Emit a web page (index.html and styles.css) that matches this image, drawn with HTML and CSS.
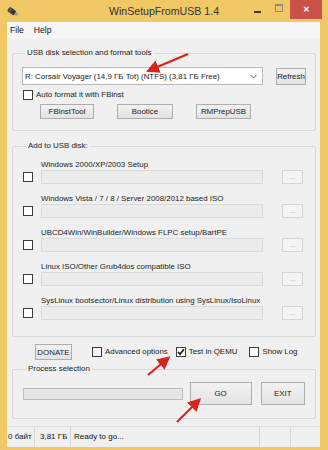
FILE: index.html
```html
<!DOCTYPE html>
<html>
<head>
    <title>WinSetupFromUSB 1.4</title>
    <link rel="stylesheet" href="styles.css">
</head>
<body>
<div class="window">
    <div class="titlebar">
        <div class="title-left">
            <svg class="app-icon" width="12" height="12" viewBox="0 0 12 12">
                <g transform="rotate(35 6 6)">
                    <rect x="0.5" y="3.5" width="8" height="5" rx="1" fill="#3a3a3a"/>
                    <rect x="8.5" y="4.3" width="3" height="3.4" fill="#9a9a9a"/>
                    <rect x="1.5" y="4.5" width="2" height="3" fill="#6b6b6b"/>
                </g>
            </svg>
        </div>
        <span class="title">WinSetupFromUSB 1.4</span>
        <div class="caption-buttons">
            <span class="cap cap-min"><i></i></span>
            <span class="cap cap-max"><i></i></span>
            <span class="cap cap-close">&#x2715;</span>
        </div>
    </div>

    <div class="client">
        <div class="menubar">
            <span>File</span>
            <span>Help</span>
        </div>

        <fieldset class="group group-usb">
            <legend>USB disk selection and format tools</legend>
            <div class="disk-row">
                <div class="combo">
                    <span>R: Corsair Voyager (14,9 ГБ Tot) (NTFS) (3,81 ГБ Free)</span>
                    <svg class="chevron" width="7" height="5" viewBox="0 0 7 5"><path d="M0.5 1 L3.5 4 L6.5 1" fill="none" stroke="#555" stroke-width="1"/></svg>
                </div>
                <button class="btn btn-refresh">Refresh</button>
            </div>
            <div class="check check-auto"><span class="box"></span>Auto format it with FBinst</div>
            <div class="tool-row">
                <button class="btn btn-fbinst">FBinstTool</button>
                <button class="btn btn-bootice">Bootice</button>
                <button class="btn btn-rmprep">RMPrepUSB</button>
            </div>
        </fieldset>

        <fieldset class="group group-add">
            <legend>Add to USB disk:</legend>
            <div class="source">
                <span class="src-label">Windows 2000/XP/2003 Setup</span>
                <span class="box"></span>
                <span class="path"></span>
                <span class="browse">...</span>
            </div>
            <div class="source">
                <span class="src-label">Windows Vista / 7 / 8 / Server 2008/2012 based ISO</span>
                <span class="box"></span>
                <span class="path"></span>
                <span class="browse">...</span>
            </div>
            <div class="source">
                <span class="src-label">UBCD4Win/WinBuilder/Windows FLPC setup/BartPE</span>
                <span class="box"></span>
                <span class="path"></span>
                <span class="browse">...</span>
            </div>
            <div class="source">
                <span class="src-label">Linux ISO/Other Grub4dos compatible ISO</span>
                <span class="box"></span>
                <span class="path"></span>
                <span class="browse">...</span>
            </div>
            <div class="source">
                <span class="src-label">SysLinux bootsector/Linux distribution using SysLinux/IsoLinux</span>
                <span class="box"></span>
                <span class="path"></span>
                <span class="browse">...</span>
            </div>
        </fieldset>

        <div class="options-row">
            <button class="btn btn-donate">DONATE</button>
            <div class="check check-adv"><span class="box"></span>Advanced options</div>
            <div class="check check-qemu"><span class="box checked">
                <svg width="8" height="8" viewBox="0 0 8 8"><path d="M1 4 L3 6.3 L7 1.2" fill="none" stroke="#111" stroke-width="1.6"/></svg>
            </span>Test in QEMU</div>
            <div class="check check-log"><span class="box"></span>Show Log</div>
        </div>

        <fieldset class="group group-process">
            <legend>Process selection</legend>
            <div class="process-row">
                <div class="progress"></div>
                <button class="btn btn-go">GO</button>
                <button class="btn btn-exit">EXIT</button>
            </div>
        </fieldset>

        <div class="statusbar">
            <span class="panel p-bytes">0 байт</span>
            <span class="panel p-free">3,81 ГБ</span>
            <span class="panel p-msg">Ready to go...</span>
            <span class="panel p-e1"></span>
            <span class="panel p-e2"></span>
        </div>
    </div>

    <!-- annotation arrows drawn over the window -->
    <svg class="arrows" width="328" height="450" viewBox="0 0 328 450">
        <defs>
            <marker id="head" markerWidth="6" markerHeight="6" refX="4" refY="3" orient="auto" markerUnits="strokeWidth">
                <path d="M0 0 L6 3 L0 6 Z" fill="#d9231d"/>
            </marker>
        </defs>
        <line x1="188" y1="54" x2="150" y2="70" stroke="#d9231d" stroke-width="2.2" marker-end="url(#head)"/>
        <line x1="148" y1="375" x2="167" y2="359" stroke="#d9231d" stroke-width="2.2" marker-end="url(#head)"/>
        <line x1="177" y1="422" x2="198" y2="401" stroke="#d9231d" stroke-width="2.2" marker-end="url(#head)"/>
    </svg>
</div>
</body>
</html>
```

FILE: styles.css
```css
body {
    margin: 0;
    font-family: 'Liberation Sans', Arial, sans-serif;
    color: #222;
}
.window {
    position: relative;
    width: 328px;
    height: 450px;
    background-color: #f1c866;
    display: flex;
    flex-direction: column;
    box-sizing: border-box;
    padding-bottom: 3px;
}
.titlebar {
    height: 22px;
    display: grid;
    grid-template-columns: 1fr auto 1fr;
    align-items: start;
}
.title-left {
    padding: 6px 0 0 7px;
}
.app-icon {
    display: block;
}
.title {
    font-size: 10.6px;
    line-height: 22px;
    color: #333;
}
.caption-buttons {
    display: flex;
    justify-content: flex-end;
    padding-right: 6px;
}
.cap {
    width: 22px;
    height: 19px;
    display: flex;
    align-items: center;
    justify-content: center;
}
.cap-min i {
    width: 7px;
    height: 2px;
    background-color: #3a3a3a;
    margin-top: 4px;
}
.cap-max i {
    width: 6px;
    height: 5px;
    border: 1px solid #8a8a8a;
    border-top-width: 2px;
    margin-top: -3px;
}
.cap-close {
    width: 32px;
    background-color: #c9514a;
    color: white;
    font-size: 8px;
    font-weight: bold;
}
.client {
    flex: 1;
    margin: 0 8px 0 7px;
    background-color: #f0f0f0;
    display: flex;
    flex-direction: column;
    font-size: 7.9px;
}
.menubar {
    height: 16px;
    background-color: #f7f7f7;
    display: flex;
    gap: 10px;
    padding-left: 3px;
    font-size: 8.6px;
    line-height: 16px;
    color: #111;
}
.group {
    margin: 10px 4px 0 5px;
    border: 1px solid #d9d9d9;
    border-radius: 2px;
    min-width: 0;
}
.group legend {
    padding: 0 2px;
    margin-left: 3px;
    line-height: 10px;
}
.group-usb {
    padding: 9px 9px 11px 9px;
}
.disk-row {
    display: flex;
    align-items: center;
}
.combo {
    width: 241px;
    height: 18px;
    box-sizing: border-box;
    background-color: white;
    border: 1px solid #b9b9b9;
    display: flex;
    align-items: center;
    justify-content: space-between;
    padding: 0 5px 0 2px;
}
.btn {
    font-family: inherit;
    font-size: 7.9px;
    color: #222;
    background: linear-gradient(#f2f2f2, #e3e3e3);
    border: 1px solid #adadad;
    padding: 0;
    box-sizing: border-box;
}
.btn-refresh {
    width: 30px;
    height: 17px;
    margin-left: 13px;
}
.check {
    display: flex;
    align-items: center;
    line-height: 10px;
    white-space: nowrap;
}
.box {
    width: 10px;
    height: 10px;
    box-sizing: border-box;
    border: 1px solid #3c3c3c;
    background-color: white;
    display: flex;
    align-items: center;
    justify-content: center;
}
.check .box {
    margin-right: 3px;
}
.check-auto {
    margin: 5px 0 0 1px;
}
.tool-row {
    display: flex;
    gap: 23px;
    margin: 4px 0 0 18px;
}
.tool-row .btn {
    height: 15px;
}
.btn-fbinst { width: 54px; }
.btn-bootice { width: 56px; }
.btn-rmprep { width: 55px; }

.group-add {
    padding: 8px 10px 16px 10px;
}
.source {
    display: grid;
    grid-template-columns: 18px 222px 40px;
    grid-template-rows: 11px 14px;
    align-items: center;
    margin-bottom: 9px;
}
.source:last-child {
    margin-bottom: 0;
}
.src-label {
    grid-column: 2 / 4;
    line-height: 11px;
    align-self: start;
    white-space: nowrap;
}
.source .box {
    grid-row: 2;
    grid-column: 1;
}
.path {
    grid-row: 2;
    grid-column: 2;
    height: 14px;
    box-sizing: border-box;
    background-color: #ececec;
    border: 1px solid #dadada;
}
.browse {
    grid-row: 2;
    grid-column: 3;
    justify-self: end;
    width: 21px;
    height: 14px;
    box-sizing: border-box;
    border: 1px solid #d4d4d4;
    background-color: #f4f4f4;
    color: #b0b0b0;
    text-align: center;
    line-height: 11px;
}
.options-row {
    display: flex;
    align-items: center;
    margin: 7px 0 0 28px;
}
.btn-donate {
    width: 37px;
    height: 16px;
    margin-right: 20px;
}
.check-qemu {
    margin-left: 8px;
}
.check-log {
    margin-left: 12px;
}
.group-process {
    margin-top: 4px;
    padding: 8px 10px 13px 10px;
}
.process-row {
    display: flex;
    align-items: center;
}
.progress {
    width: 162px;
    height: 12px;
    box-sizing: border-box;
    background-color: #e6e6e6;
    border: 1px solid #bcbcbc;
}
.btn-go {
    width: 63px;
    height: 23px;
    margin-left: 7px;
}
.btn-exit {
    width: 45px;
    height: 23px;
    margin-left: 9px;
}
.statusbar {
    margin-top: auto;
    height: 20px;
    border-top: 1px solid #dedede;
    display: flex;
    font-size: 8px;
    line-height: 20px;
    color: #111;
    white-space: nowrap;
}
.panel {
    border-right: 1px solid #d5d5d5;
    box-sizing: border-box;
}
.p-bytes { width: 28px; padding-left: 1px; }
.p-free { width: 36px; padding-left: 5px; }
.p-msg { width: 189px; padding-left: 3px; }
.p-e1 { width: 31px; }
.p-e2 { flex: 1; border-right: none; }
.arrows {
    position: absolute;
    left: 0;
    top: 0;
    pointer-events: none;
}
```
